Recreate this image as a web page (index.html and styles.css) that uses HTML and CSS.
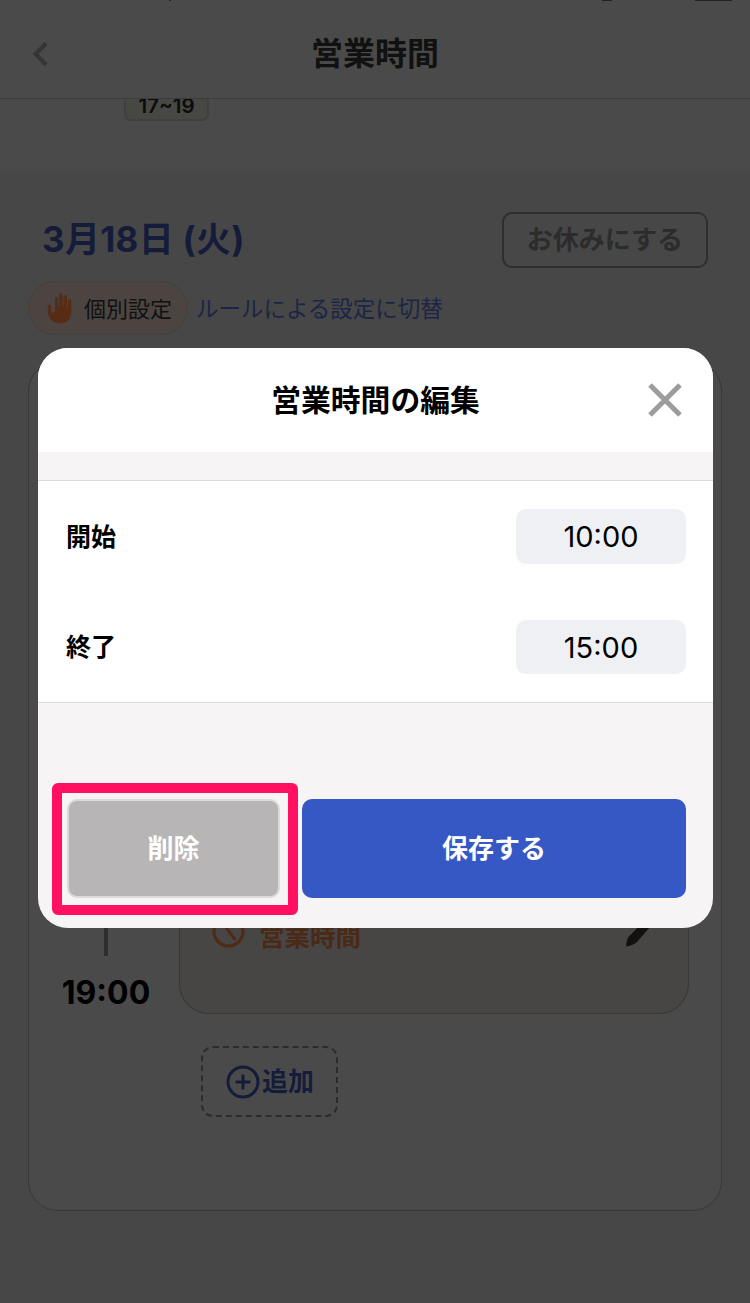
FILE: index.html
```html
<!DOCTYPE html>
<html lang="ja">
<head>
<meta charset="utf-8">
<title>営業時間</title>
<link rel="stylesheet" href="styles.css">
</head>
<body>
<div class="screen">
  <header class="topbar">
    <div class="status"><span class="mark mark-a"></span><span class="mark mark-b"></span><span class="mark mark-c"></span></div>
    <svg class="back" viewBox="0 0 16 24" width="16" height="24"><path d="M14 1.500 L3.500 12 L14 22.500" fill="none" stroke="#353535" stroke-width="4"/></svg>
    <h1 class="topbar-title">営業時間</h1>
  </header>
  <div class="band"><span class="hour-chip">17~19</span></div>
  <main class="content">
    <div class="date-row">
      <h2 class="date">3月18日 (火)</h2>
      <button class="rest-btn">お休みにする</button>
    </div>
    <div class="mode-row">
      <span class="pill">
        <svg class="hand" viewBox="0 0 28 32" width="28" height="32"><path fill="#572c14" d="M8 6.500a1.600 1.600 0 0 1 3.200 0V14h1V3a1.700 1.700 0 0 1 3.400 0v11h1V4.600a1.700 1.700 0 0 1 3.400 0V15h1V8.500a1.600 1.600 0 0 1 3.200 0V21c0 6-4.500 10.500-11 10.500C7.500 31.500 3 28 .8 21.500V14.500a1.700 1.700 0 0 1 3.400 0V19c0 1 .6 1.500 1 1.500H6c1 0 2-1 2-2z"/></svg>
        <span class="pill-text">個別設定</span>
      </span>
      <a class="switch-link">ルールによる設定に切替</a>
    </div>
    <section class="card">
      <div class="slot">
        <div class="slot-axis">
          <span class="axis-line"></span>
          <span class="axis-time">19:00</span>
        </div>
        <div class="slot-block">
          <div class="slot-label">
            <svg class="clock" viewBox="0 0 33 33" width="33" height="33"><circle cx="16.500" cy="16.500" r="14.500" fill="none" stroke="#4e2b16" stroke-width="3.200"/><path d="M14 4 L15 14 L23.500 25" fill="none" stroke="#4e2b16" stroke-width="3"/></svg>
            <span class="label-text">営業時間</span>
            <svg class="pencil" viewBox="0 0 30 32" width="30" height="32"><path fill="#111" d="M1 29.500 Q1.500 23 3.500 20 L20 3 L26 9 L11 26 Q7 29 1 29.500z"/><path fill="#111" d="M23 3 L27 -1 L32 4 L28 8z"/></svg>
          </div>
        </div>
      </div>
      <button class="add-btn">
        <svg viewBox="0 0 34 34" width="34" height="34"><circle cx="17" cy="17" r="15" fill="none" stroke="#141c3a" stroke-width="3"/><path d="M17 9.500V24.500M9.500 17H24.500" stroke="#141c3a" stroke-width="3"/></svg>
        <span class="add-text">追加</span>
      </button>
    </section>
  </main>

  <div class="modal">
    <div class="modal-head">
      <h3 class="modal-title">営業時間の編集</h3>
      <svg class="close" viewBox="0 0 34 34" width="34" height="34"><path d="M2 2 L32 32 M32 2 L2 32" stroke="#9c9c9c" stroke-width="5"/></svg>
    </div>
    <div class="modal-gap"></div>
    <div class="modal-rows">
      <div class="row"><span class="row-label">開始</span><span class="time-input">10:00</span></div>
      <div class="row"><span class="row-label">終了</span><span class="time-input">15:00</span></div>
    </div>
    <div class="modal-foot">
      <button class="btn btn-delete">削除</button>
      <button class="btn btn-save">保存する</button>
    </div>
    <div class="highlight"></div>
  </div>
</div>
</body>
</html>
```
FILE: styles.css
```css
* { box-sizing: border-box; }
html, body { margin: 0; padding: 0; }
body { font-family: "Inter", "Noto Sans CJK JP", sans-serif; color: #000; background: #474747; }
h1, h2, h3 { margin: 0; }
button { font-family: inherit; cursor: pointer; }

.screen { position: relative; width: 750px; height: 1303px; overflow: hidden; background: #474747; }

.topbar { position: relative; z-index: 1; height: 99px; background: #4a4a4a; border-bottom: 1px solid #3c3c3c; display: flex; align-items: center; justify-content: center; }
.status { position: absolute; left: 0; top: 0; height: 1px; width: 100%; display: flex; }
.mark { height: 1px; background: #222; }
.mark-a { width: 2px; margin-left: 169px; }
.mark-b { width: 10px; margin-left: 431px; }
.mark-c { width: 37px; margin-left: 83px; }
.back { position: absolute; left: 32px; top: 42px; }
.topbar-title { font-size: 32px; font-weight: 700; line-height: 40px; margin-top: 9px; color: #111; }

.band { height: 71px; background: #4a4a4a; padding-left: 124px; }
.hour-chip { display: block; width: 85px; height: 23px; margin-top: -1px; border: 2px solid #40403e; border-top: 0; border-radius: 0 0 7px 7px; background: #474744; color: #0c0c0c; font-weight: 600; font-size: 20.500px; line-height: 16px; text-align: center; }

.content { padding: 43px 28px 0; }
.date-row { display: flex; justify-content: space-between; align-items: center; padding-left: 14px; padding-right: 14px; }
.date { font-size: 35px; font-weight: 700; color: #141c3a; line-height: 54px; padding-bottom: 2px; letter-spacing: .3px; }
.rest-btn { width: 206px; height: 56px; padding: 0 0 6px; border: 2px solid #2e2e2e; border-radius: 10px; background: #474747; color: #2c2c2c; font-size: 26px; font-weight: 700; }
.mode-row { display: flex; align-items: center; margin-top: 13px; gap: 8px; }
.pill { display: flex; align-items: center; gap: 9px; width: 160px; height: 54px; padding-left: 18px; border: 1px solid #46403e; border-radius: 27px; background: #4b4441; font-size: 22px; color: #111; }
.pill-text { padding-bottom: 2px; }
.switch-link { font-size: 22.500px; color: #1c2545; padding-bottom: 2px; }

.card { margin-top: 26px; height: 850px; width: 694px; padding: 0 32px 0 10px; border: 1px solid #383838; border-radius: 30px; background: #4a4a4a; display: flex; flex-direction: column; }
.slot { display: flex; gap: 6px; height: 652px; }
.slot-axis { width: 134px; display: flex; flex-direction: column; align-items: center; padding-bottom: 2px; }
.axis-line { flex: 1; width: 4px; background: #2e2e2e; }
.axis-time { margin-top: 18px; font-size: 32px; font-weight: 700; line-height: 38px; color: #000; }
.slot-block { flex: 1; display: flex; flex-direction: column; justify-content: flex-end; padding: 0 33px 59px 32px; border: 1px solid #383837; border-top: 0; border-radius: 0 0 30px 30px; background: #474644; }
.slot-label { display: flex; align-items: center; gap: 14px; height: 40px; color: #4a2917; font-size: 25.500px; font-weight: 700; }
.clock { margin-top: -6px; }
.pencil { margin-left: auto; margin-top: -2px; }
.add-btn { align-self: flex-start; margin: 32px 0 0 162px; width: 137px; height: 71px; padding: 0 0 0 23px; display: flex; align-items: center; gap: 2px; border: 2px dashed #2c2c2c; border-radius: 12px; background: transparent; color: #141c3a; font-size: 26px; font-weight: 700; }
.add-text { padding-bottom: 4px; }

.modal { position: absolute; z-index: 3; left: 38px; top: 348px; width: 675px; height: 580px; border-radius: 30px; background: #f6f4f5; display: flex; flex-direction: column; }
.modal-head { position: relative; height: 104px; background: #fff; border-radius: 30px 30px 0 0; display: flex; align-items: center; justify-content: center; }
.modal-title { font-size: 29.800px; font-weight: 700; line-height: 40px; }
.close { position: absolute; left: 610px; top: 35px; }
.modal-gap { height: 28px; }
.modal-rows { height: 223px; background: #fff; border-top: 1px solid #dcdcdc; border-bottom: 1px solid #dcdcdc; display: flex; flex-direction: column; }
.row { height: 110px; display: flex; align-items: center; justify-content: space-between; padding: 0 27px 0 28px; }
.row:first-child { height: 111px; }
.row-label { font-size: 25px; font-weight: 700; padding-bottom: 4px; }
.time-input { width: 170px; height: 54.500px; border-radius: 10px; background: #eff0f4; font-size: 29px; line-height: 55px; text-align: center; }
.modal-foot { flex: 1; display: flex; gap: 22px; padding: 96px 27px 0 29px; }
.btn { height: 99px; padding: 0 0 4px; border-radius: 10px; font-size: 26px; font-weight: 700; color: #fff; }
.btn-delete { width: 213px; background: #b8b5b6; border: 2px solid #dcdadb; }
.btn-save { width: 384px; background: #3558c4; border: 0; }
.highlight { position: absolute; left: 14px; top: 435px; width: 246px; height: 132px; border: 10px solid #ff1060; border-radius: 6px; pointer-events: none; }
```
